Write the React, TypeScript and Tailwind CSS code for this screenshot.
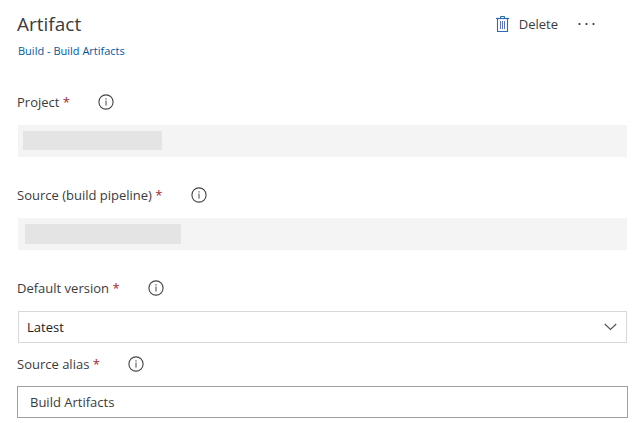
import { useState } from 'react'
import type { ReactNode } from 'react'

function InfoIcon() {
  return (
    <svg width="16" height="16" viewBox="0 0 16 16" fill="none" stroke="#444444">
      <circle cx="8" cy="8" r="7.1" strokeWidth="1.1" />
      <path d="M8 6.6v5" strokeWidth="1" />
      <path d="M8 4.2v1.2" strokeWidth="1.1" />
    </svg>
  )
}

function TrashIcon() {
  return (
    <svg width="13" height="17" viewBox="0 0 13 17" fill="none" stroke="#2b6cb0">
      <path d="M0 2.5h13" strokeWidth="1.2" />
      <path d="M4.5 2.5v-2h4v2" strokeWidth="1" />
      <path d="M1.5 3v12.5h10V3" strokeWidth="1.1" />
      <path d="M4.5 5v8M6.5 5v8M8.5 5v8" stroke="#5b72b8" strokeWidth="1" />
    </svg>
  )
}

function Field({ id, label, children }: { id: string; label: string; children: ReactNode }) {
  return (
    <div>
      <div className="flex items-center gap-7 h-5">
        <label htmlFor={id}>
          {label} <span className="text-[#a4262c]">*</span>
        </label>
        <button type="button" aria-label={`About ${label}`}>
          <InfoIcon />
        </button>
      </div>
      {children}
    </div>
  )
}

export default function App() {
  const [version, setVersion] = useState('Latest')
  const [alias, setAlias] = useState('Build Artifacts')

  return (
    <main className="bg-white pl-[17px] pr-2 pt-2.5 pb-[5px] font-['Open_Sans','Noto_Sans',sans-serif] text-[13px] leading-5 text-[#3b3b3b]">
      <header className="flex items-start justify-between">
        <div>
          <h1 className="text-[19px] leading-7">Artifact</h1>
          <a href="#build" className="block mt-[3px] pl-px text-[11px] leading-5 text-[#005a9e]">
            Build - Build Artifacts
          </a>
        </div>
        <div className="flex items-center h-7 gap-5 pr-[33px]">
          <button type="button" className="flex items-center gap-2.5">
            <TrashIcon />
            Delete
          </button>
          <button type="button" aria-label="More actions">
            <svg width="17" height="4" viewBox="0 0 17 4" fill="#333333">
              <circle cx="1.5" cy="2" r="1.1" />
              <circle cx="8.5" cy="2" r="1.1" />
              <circle cx="15.5" cy="2" r="1.1" />
            </svg>
          </button>
        </div>
      </header>

      <form className="mt-[31px]">
        <div className="space-y-7">
          <Field id="project" label="Project">
            <div className="relative mx-px mt-[13px]">
              <input id="project" disabled className="block w-full h-8 bg-[#f4f4f4]" />
              <span className="absolute left-[5px] top-1.5 w-[139px] h-[19px] bg-[#e4e4e4]" />
            </div>
          </Field>
          <Field id="source" label="Source (build pipeline)">
            <div className="relative mx-px mt-[13px]">
              <input id="source" disabled className="block w-full h-8 bg-[#f4f4f4]" />
              <span className="absolute left-[7px] top-1.5 w-[156px] h-5 bg-[#e4e4e4]" />
            </div>
          </Field>
          <Field id="version" label="Default version">
            <div className="relative mx-px mt-[13px]">
              <select
                id="version"
                value={version}
                onChange={(e) => setVersion(e.target.value)}
                className="block w-full h-8 pl-2 appearance-none border border-[#d8d8d8] bg-white text-[#222222]"
              >
                <option>Latest</option>
              </select>
              <svg
                className="absolute right-2.5 top-3 pointer-events-none"
                width="13"
                height="8"
                viewBox="0 0 13 8"
                fill="none"
                stroke="#555555"
                strokeWidth="1.2"
              >
                <path d="M.8 1l5.7 5.5L12.2 1" />
              </svg>
            </div>
          </Field>
        </div>
        <div className="mt-[11px]">
          <Field id="alias" label="Source alias">
            <input
              id="alias"
              type="text"
              value={alias}
              onChange={(e) => setAlias(e.target.value)}
              className="block w-full h-8 mt-3 px-3 border border-[#a0a0a0] bg-white"
            />
          </Field>
        </div>
      </form>
    </main>
  )
}
